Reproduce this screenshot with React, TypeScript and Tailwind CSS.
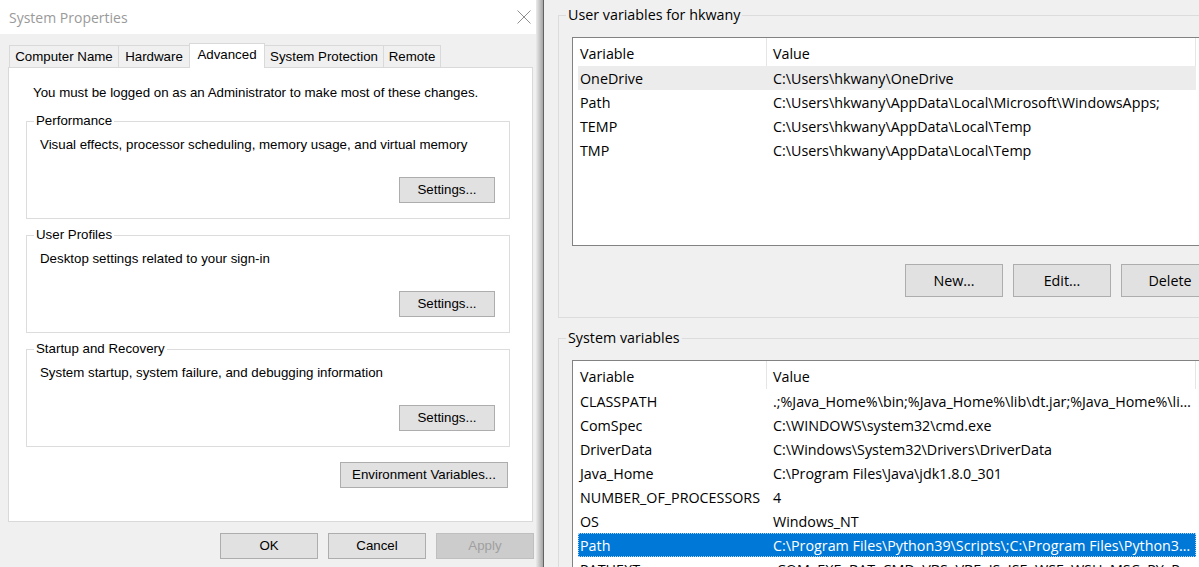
import React from "react";

const leftFont = "font-['Liberation_Sans',Arial,sans-serif] text-[13.3px] text-black";
const rightFont = "font-['Open_Sans','Noto_Sans',sans-serif] text-[14.3px] text-black";

const tabs = [
  { label: "Computer Name", w: "w-[110px]" },
  { label: "Hardware", w: "w-[71px]" },
  { label: "Advanced", w: "w-[76px]", active: true },
  { label: "System Protection", w: "w-[119px]" },
  { label: "Remote", w: "w-[57px]" },
];

const groups = [
  { title: "Performance", text: "Visual effects, processor scheduling, memory usage, and virtual memory" },
  { title: "User Profiles", text: "Desktop settings related to your sign-in" },
  { title: "Startup and Recovery", text: "System startup, system failure, and debugging information" },
];

const userVars = [
  ["OneDrive", "C:\\Users\\hkwany\\OneDrive"],
  ["Path", "C:\\Users\\hkwany\\AppData\\Local\\Microsoft\\WindowsApps;"],
  ["TEMP", "C:\\Users\\hkwany\\AppData\\Local\\Temp"],
  ["TMP", "C:\\Users\\hkwany\\AppData\\Local\\Temp"],
];

const systemVars = [
  ["CLASSPATH", ".;%Java_Home%\\bin;%Java_Home%\\lib\\dt.jar;%Java_Home%\\lib\\tools.jar"],
  ["ComSpec", "C:\\WINDOWS\\system32\\cmd.exe"],
  ["DriverData", "C:\\Windows\\System32\\Drivers\\DriverData"],
  ["Java_Home", "C:\\Program Files\\Java\\jdk1.8.0_301"],
  ["NUMBER_OF_PROCESSORS", "4"],
  ["OS", "Windows_NT"],
  ["Path", "C:\\Program Files\\Python39\\Scripts\\;C:\\Program Files\\Python39\\;C:\\WINDOWS\\system32"],
  ["PATHEXT", ".COM;.EXE;.BAT;.CMD;.VBS;.VBE;.JS;.JSE;.WSF;.WSH;.MSC;.PY;.PYW"],
];

function WinButton({ w, h, disabled, children }: { w: string; h: string; disabled?: boolean; children: React.ReactNode }) {
  return (
    <button
      className={
        `${w} ${h} flex shrink-0 items-center justify-center border ` +
        (disabled ? "border-[#bfbfbf] bg-[#cccccc] text-[#a0a0a0]" : "border-[#adadad] bg-[#e1e1e1]")
      }
    >
      {children}
    </button>
  );
}

function Group({ title, text }: { title: string; text: string }) {
  return (
    <fieldset className="mt-[8px] h-[106px] w-[484px] shrink-0 border border-[#dcdcdc] first-of-type:mt-[12px]">
      <legend className="ml-[7px] px-[2px] leading-[16px]">{title}</legend>
      <p className="mt-[8px] pl-[13px] leading-[16px]">{text}</p>
      <div className="mt-[24px] flex justify-end pr-[14px]">
        <WinButton w="w-[96px]" h="h-[26px]">Settings...</WinButton>
      </div>
    </fieldset>
  );
}

function VarList({ rows, height, selected, hover }: { rows: string[][]; height: string; selected?: number; hover?: number }) {
  return (
    <div className={`ml-[13px] mt-[12px] w-[647px] ${height} overflow-hidden border border-[#828282] bg-white`}>
      <div className="flex h-[28px] items-start">
        <div className="h-[28px] w-[194px] border-r border-[#e5e5e5] pl-[7px] leading-[32px]">Variable</div>
        <div className="h-[28px] w-[429px] border-r border-[#e5e5e5] pl-[6px] leading-[32px]">Value</div>
      </div>
      {rows.map(([name, value], i) => (
        <div
          key={name + i}
          className={
            "ml-[5px] flex h-[24px] w-[618px] items-start " +
            (i === selected
              ? "bg-[#0078d7] text-white outline-1 -outline-offset-1 outline-dotted outline-[#b3d4f0]"
              : i === hover
              ? "bg-[#ececec]"
              : "")
          }
        >
          <div className="h-[24px] w-[189px] shrink-0 truncate pl-[2px] leading-[26px]">{name}</div>
          <div className="h-[24px] w-[431px] truncate pl-[6px] leading-[26px]">{value}</div>
        </div>
      ))}
    </div>
  );
}

export default function App() {
  return (
    <div className="flex h-[567px] w-[1199px] overflow-hidden bg-[#f0f0f0]">
      {/* System Properties window */}
      <div className={`flex w-[536px] shrink-0 flex-col ${leftFont}`}>
        <div className="flex h-[34px] shrink-0 items-center justify-between bg-white pl-[9px] pr-[4px]">
          <span className="font-['Open_Sans',sans-serif] text-[14px] text-[#9a9a9a]">System Properties</span>
          <svg width="16" height="16" viewBox="0 0 16 16" className="text-[#8f8f8f]">
            <path d="M1.5 1.5 L14.5 14.5 M14.5 1.5 L1.5 14.5" stroke="currentColor" strokeWidth="1" fill="none" />
          </svg>
        </div>
        <div className="flex flex-1 flex-col bg-[#f0f0f0] pl-[8px] pr-[3px] pt-[9px]">
          <div className="ml-[1px] flex h-[24px] shrink-0 items-end">
            {tabs.map((t, i) => (
              <div
                key={t.label}
                className={
                  `${t.w} flex items-center justify-center border-r border-t border-[#d9d9d9] ` +
                  (i === 0 ? "border-l " : "") +
                  (t.active
                    ? "relative z-10 -mb-px -ml-px h-[25px] border-l bg-white pb-[3px]"
                    : "h-[22px] bg-[#f0f0f0]")
                }
              >
                {t.label}
              </div>
            ))}
          </div>
          <div className="flex h-[455px] w-[525px] shrink-0 flex-col border border-[#d9d9d9] bg-white pl-[17px] pt-[17px]">
            <p className="pl-[7px] leading-[16px]">You must be logged on as an Administrator to make most of these changes.</p>
            {groups.map((g) => (
              <Group key={g.title} title={g.title} text={g.text} />
            ))}
            <div className="mt-[15px] flex w-[484px] justify-end pr-[2px]">
              <WinButton w="w-[168px]" h="h-[26px]">Environment Variables...</WinButton>
            </div>
          </div>
          <div className="-mr-px mt-[11px] flex justify-end gap-[10px]">
            <WinButton w="w-[98px]" h="h-[26px]">OK</WinButton>
            <WinButton w="w-[98px]" h="h-[26px]">Cancel</WinButton>
            <WinButton w="w-[98px]" h="h-[26px]" disabled>Apply</WinButton>
          </div>
        </div>
      </div>

      {/* window shadow */}
      <div className="w-[7px] shrink-0 bg-linear-to-r from-[#ebebeb] to-[#a6a6a6]" />

      {/* Environment Variables window */}
      <div className={`flex w-[700px] shrink-0 flex-col border-l border-[#626262] bg-[#f0f0f0] pl-[14px] pt-[5px] ${rightFont}`}>
        <fieldset className="h-[313px] w-[671px] shrink-0 border border-[#dcdcdc]">
          <legend className="ml-[7px] px-[2px] leading-[20px]">User variables for hkwany</legend>
          <VarList rows={userVars} height="h-[209px]" hover={0} />
          <div className="ml-[13px] mt-[18px] flex w-[647px] justify-end gap-[10px]">
            <WinButton w="w-[98px]" h="h-[33px]">New...</WinButton>
            <WinButton w="w-[98px]" h="h-[33px]">Edit...</WinButton>
            <WinButton w="w-[98px]" h="h-[33px]">Delete</WinButton>
          </div>
        </fieldset>
        <fieldset className="mt-[10px] h-[300px] w-[671px] shrink-0 border border-[#dcdcdc]">
          <legend className="ml-[7px] px-[2px] leading-[20px]">System variables</legend>
          <VarList rows={systemVars} height="h-[250px]" selected={6} />
        </fieldset>
      </div>
    </div>
  );
}
